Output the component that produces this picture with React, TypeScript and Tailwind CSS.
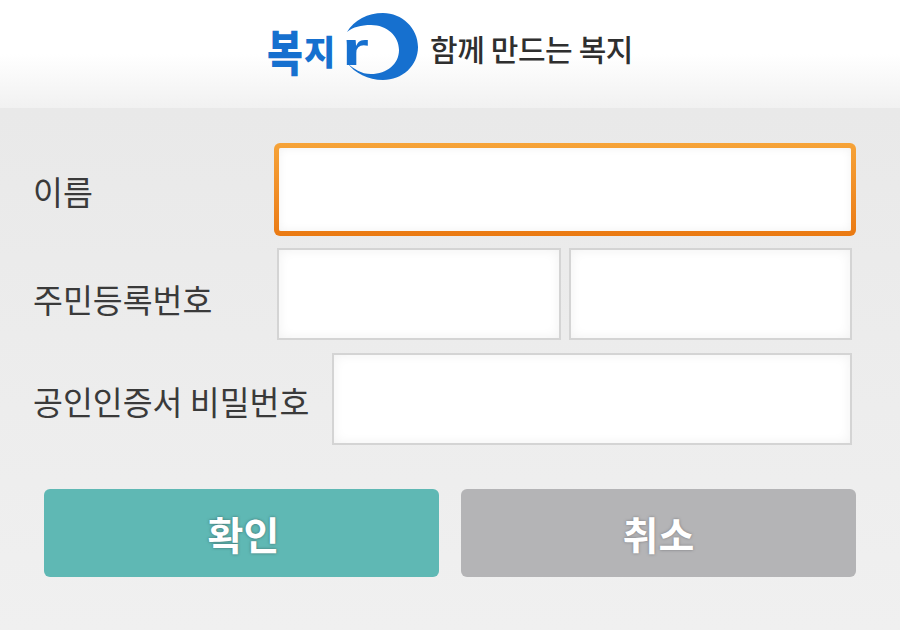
const FONT = "font-['Noto_Sans_CJK_KR','Noto_Sans',sans-serif]";

function Logo() {
  return (
    <div className="relative h-[72px] w-[151px]">
      <svg className="absolute left-[74px] top-0" width="80" height="72" viewBox="0 0 80 72">
        {/* 초승달 */}
        <path
          d="M6 20 C13 8 27 1 42 1 C61 1 77 16 77 35 C77 54 61 68 42 68 C27 68 14 61 6 51 C13 57 20 62 30 62 C46 62 58 52 58 38 C58 24 46 13 30 13 C20 13 12 15 6 20 Z"
          fill="#1670cf"
        />
      </svg>
      <span className={`absolute left-0 top-[16px] origin-center scale-y-125 text-[39px] leading-[44px] font-black text-[#1670cf] ${FONT}`}>
        복
      </span>
      <span className={`absolute left-[37px] top-[17px] text-[34px] leading-[44px] font-black text-[#1670cf] ${FONT}`}>
        지
      </span>
      <span className="absolute left-[75px] top-[9px] origin-left scale-x-150 text-[46px] leading-[56px] font-bold text-[#1670cf] font-['Liberation_Sans',sans-serif]">
        r
      </span>
    </div>
  );
}

function Field({ className = "" }: { className?: string }) {
  return (
    <div className={`h-[92px] border-2 border-[#d4d4d4] bg-white shadow-[inset_0_0_12px_#f1f1f1] ${className}`} />
  );
}

function Label({ children, className = "" }: { children: string; className?: string }) {
  return (
    <span className={`text-[32.5px] leading-none whitespace-nowrap text-[#3a3a3a] ${className}`}>{children}</span>
  );
}

export default function App() {
  return (
    <div className={`flex h-[630px] w-[900px] flex-col overflow-hidden bg-[#ededed] ${FONT}`}>
      {/* 헤더 */}
      <header className="flex h-[108px] items-start justify-center gap-[12px] bg-gradient-to-b from-white from-50% to-[#f1f1f1] pt-[12px]">
        <Logo />
        <span className="mt-[15px] text-[30px] leading-[42px] font-medium tracking-[-0.4px] whitespace-nowrap text-[#2f2f2f]">
          함께 만드는 복지
        </span>
      </header>

      <main className="flex flex-1 flex-col bg-gradient-to-b from-[#e9e9e9] to-[#f0f0f0] pt-[35px]">
        {/* 입력 */}
        <div className="flex items-center pl-[33px] pr-[44px]">
          <Label className="w-[241px] pt-[4px]">이름</Label>
          <div className="h-[93px] flex-1 rounded-[6px] bg-gradient-to-b from-[#f6a338] to-[#ea7a12] p-[5px]">
            <div className="h-full rounded-[2px] bg-white shadow-[inset_0_0_10px_#f1f1f1]" />
          </div>
        </div>
        <div className="mt-[12px] flex items-center pl-[33px] pr-[48px]">
          <Label className="w-[244px] pt-[10px]">주민등록번호</Label>
          <div className="flex flex-1 gap-[8px]">
            <Field className="flex-1" />
            <Field className="flex-1" />
          </div>
        </div>
        <div className="mt-[13px] flex items-center pl-[33px] pr-[48px]">
          <Label className="w-[299px] pt-[4px]">공인인증서 비밀번호</Label>
          <Field className="flex-1" />
        </div>

        {/* 버튼 */}
        <div className="mt-[44px] flex justify-between px-[44px]">
          <button className="h-[88px] w-[395px] rounded-[6px] bg-[#5fb8b4] pl-[4px] text-[39px] font-bold text-white [text-shadow:0_0_3px_#3f6f6c]">
            확인
          </button>
          <button className="h-[88px] w-[395px] rounded-[6px] bg-[#b4b4b6] text-[39px] font-bold text-white [text-shadow:0_0_3px_#77777a]">
            취소
          </button>
        </div>
      </main>
    </div>
  );
}
